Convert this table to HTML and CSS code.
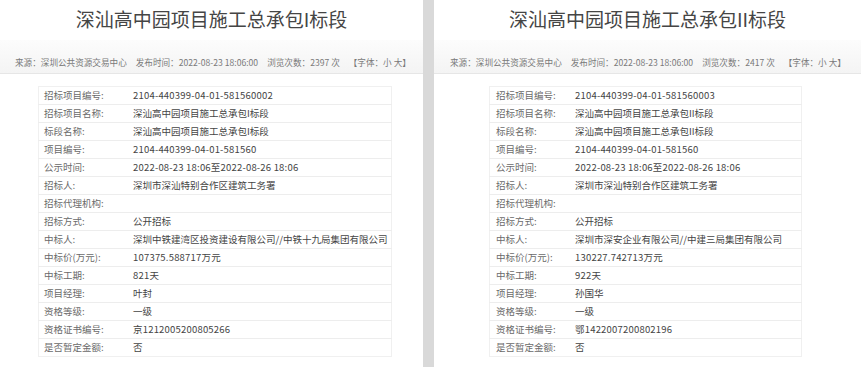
FILE: index.html
```html
<!DOCTYPE html>
<html lang="zh-CN">
<head>
<meta charset="utf-8">
<title>深汕高中园项目施工总承包</title>
<link rel="stylesheet" href="styles.css">
</head>
<body>
<div class="page">
  <section class="panel panel-a">
    <h1 class="title">深汕高中园项目施工总承包I标段</h1>
    <div class="meta">
      <span class="meta-item">来源：深圳公共资源交易中心</span>
      <span class="meta-item">发布时间：2022-08-23 18:06:00</span>
      <span class="meta-item">浏览次数：2397 次</span>
      <span class="meta-item">【字体：小 大】</span>
    </div>
    <table class="info">
      <tr><td class="k">招标项目编号:</td><td class="v num">2104-440399-04-01-581560002</td></tr>
      <tr><td class="k">招标项目名称:</td><td class="v">深汕高中园项目施工总承包I标段</td></tr>
      <tr><td class="k">标段名称:</td><td class="v">深汕高中园项目施工总承包I标段</td></tr>
      <tr><td class="k">项目编号:</td><td class="v num">2104-440399-04-01-581560</td></tr>
      <tr><td class="k">公示时间:</td><td class="v num">2022-08-23 18:06至2022-08-26 18:06</td></tr>
      <tr><td class="k">招标人:</td><td class="v">深圳市深汕特别合作区建筑工务署</td></tr>
      <tr><td class="k">招标代理机构:</td><td class="v"></td></tr>
      <tr><td class="k">招标方式:</td><td class="v">公开招标</td></tr>
      <tr><td class="k">中标人:</td><td class="v">深圳中铁建湾区投资建设有限公司//中铁十九局集团有限公司</td></tr>
      <tr><td class="k">中标价(万元):</td><td class="v num">107375.588717万元</td></tr>
      <tr><td class="k">中标工期:</td><td class="v num">821天</td></tr>
      <tr><td class="k">项目经理:</td><td class="v">叶封</td></tr>
      <tr><td class="k">资格等级:</td><td class="v">一级</td></tr>
      <tr><td class="k">资格证书编号:</td><td class="v num">京1212005200805266</td></tr>
      <tr><td class="k">是否暂定金额:</td><td class="v">否</td></tr>
    </table>
  </section>
  <div class="divider"></div>
  <section class="panel panel-b">
    <h1 class="title">深汕高中园项目施工总承包II标段</h1>
    <div class="meta">
      <span class="meta-item">来源：深圳公共资源交易中心</span>
      <span class="meta-item">发布时间：2022-08-23 18:06:00</span>
      <span class="meta-item">浏览次数：2417 次</span>
      <span class="meta-item">【字体：小 大】</span>
    </div>
    <table class="info">
      <tr><td class="k">招标项目编号:</td><td class="v num">2104-440399-04-01-581560003</td></tr>
      <tr><td class="k">招标项目名称:</td><td class="v">深汕高中园项目施工总承包II标段</td></tr>
      <tr><td class="k">标段名称:</td><td class="v">深汕高中园项目施工总承包II标段</td></tr>
      <tr><td class="k">项目编号:</td><td class="v num">2104-440399-04-01-581560</td></tr>
      <tr><td class="k">公示时间:</td><td class="v num">2022-08-23 18:06至2022-08-26 18:06</td></tr>
      <tr><td class="k">招标人:</td><td class="v">深圳市深汕特别合作区建筑工务署</td></tr>
      <tr><td class="k">招标代理机构:</td><td class="v"></td></tr>
      <tr><td class="k">招标方式:</td><td class="v">公开招标</td></tr>
      <tr><td class="k">中标人:</td><td class="v">深圳市深安企业有限公司//中建三局集团有限公司</td></tr>
      <tr><td class="k">中标价(万元):</td><td class="v num">130227.742713万元</td></tr>
      <tr><td class="k">中标工期:</td><td class="v num">922天</td></tr>
      <tr><td class="k">项目经理:</td><td class="v">孙国华</td></tr>
      <tr><td class="k">资格等级:</td><td class="v">一级</td></tr>
      <tr><td class="k">资格证书编号:</td><td class="v num">鄂1422007200802196</td></tr>
      <tr><td class="k">是否暂定金额:</td><td class="v">否</td></tr>
    </table>
  </section>
</div>
</body>
</html>
```

FILE: styles.css
```css
html, body {
  margin: 0;
  padding: 0;
  background: #ffffff;
}
body {
  font-family: "Noto Sans CJK SC", "Noto Sans", sans-serif;
  color: #444;
}
.page {
  display: flex;
  width: 861px;
  height: 367px;
  overflow: hidden;
}
.panel {
  display: flex;
  flex-direction: column;
}
.panel-a {
  flex: 0 0 423px;
}
.panel-b {
  flex: 1 1 auto;
}
.divider {
  flex: 0 0 11px;
  background: #d9d9d9;
}
.title {
  margin: 0;
  height: 40px;
  line-height: 38px;
  font-size: 19px;
  font-weight: normal;
  color: #454545;
  text-align: center;
}
.meta {
  height: 34px;
  box-sizing: border-box;
  padding-top: 16px;
  background: linear-gradient(#fcfcfc, #f4f4f4);
  border-bottom: 1px solid #e6e6e6;
  font-size: 8.6px;
  line-height: 12px;
  color: #7a7a7a;
  white-space: nowrap;
  display: flex;
  gap: 9px;
}
.panel-a .meta {
  padding-left: 15px;
}
.panel-b .meta {
  padding-left: 16px;
}
.info {
  margin-top: 12px;
  border-collapse: collapse;
  border: 1px solid #f0f0f0;
  font-size: 9.5px;
  table-layout: fixed;
}
.panel-a .info {
  margin-left: 38px;
  width: 354px;
}
.panel-b .info {
  margin-left: 55px;
  width: 313px;
}
.info td {
  height: 17px;
  line-height: 17px;
  padding: 0;
  border-bottom: 1px solid #ededed;
  white-space: nowrap;
  vertical-align: middle;
}
.info tr:last-child td {
  border-bottom: none;
}
.info .k {
  color: #6a6a6a;
  padding-left: 5px;
}
.panel-a .info .k {
  width: 89px;
}
.panel-b .info .k {
  width: 79px;
  padding-left: 6px;
}
.info .v {
  color: #444;
}
.info .num {
  letter-spacing: 0.2px;
}
```
